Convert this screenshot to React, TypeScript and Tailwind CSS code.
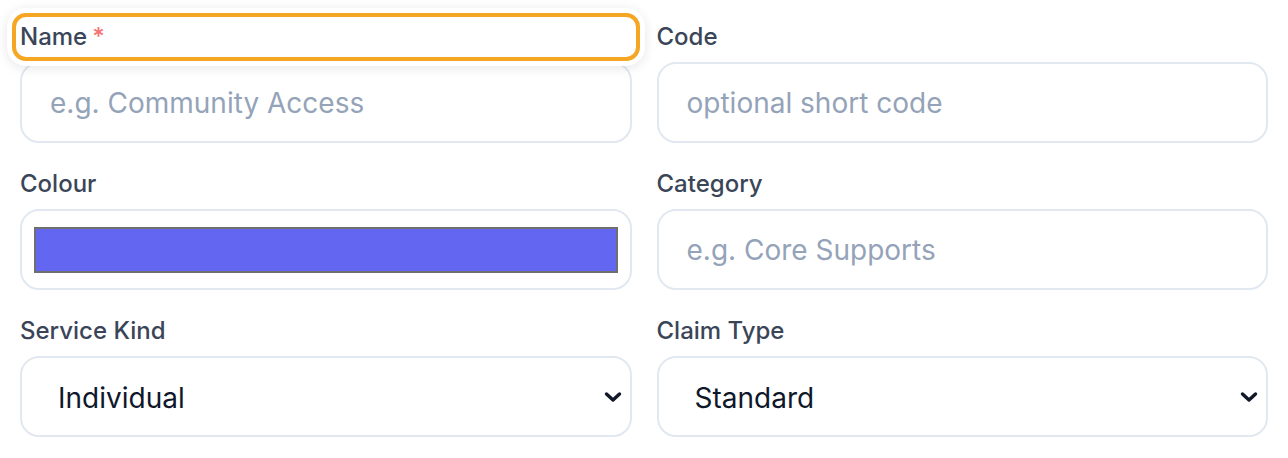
import { ReactNode } from 'react'

const font = { fontFamily: 'Inter, "Noto Sans", sans-serif' }

function Field({ label, required, focused, children }: { label: string; required?: boolean; focused?: boolean; children: ReactNode }) {
  return (
    <div className="flex flex-col">
      <div className="relative mb-[9px] h-[32px]">
        {focused && (
          <div className="pointer-events-none absolute -inset-2 rounded-[14px] border-4 border-[#f5a623] shadow-[0_0_0_5px_#ffffff,0_2px_12px_5px_rgba(0,0,0,0.10)]" />
        )}
        <label className="relative flex h-[32px] items-center text-[24px] font-medium leading-[32px] text-[#3a4658]">
          {label}
          {required && <span className="ml-[5px] text-[#f87171]">*</span>}
        </label>
      </div>
      {children}
    </div>
  )
}

function TextInput({ placeholder }: { placeholder: string }) {
  return (
    <input
      placeholder={placeholder}
      className="h-[81px] w-full rounded-[19px] border-2 border-[#e2e8f0] bg-white px-[28px] text-[28px] text-[#0f172a] outline-none placeholder:text-[#94a3b8]"
      style={font}
    />
  )
}

function Select({ value }: { value: string }) {
  return (
    <div className="relative">
      <select
        defaultValue={value}
        className="h-[81px] w-full appearance-none rounded-[19px] border-2 border-[#e2e8f0] bg-white pl-[36px] pr-12 pt-[2px] text-[28px] text-[#0f172a] outline-none"
        style={font}
      >
        <option>{value}</option>
      </select>
      <svg
        className="pointer-events-none absolute right-[10px] top-1/2 -translate-y-1/2"
        width="18"
        height="12"
        viewBox="0 0 18 12"
        fill="none"
      >
        <path d="M2.5 3 L9 9 L15.5 3" stroke="#111827" strokeWidth="3.4" strokeLinecap="round" strokeLinejoin="round" />
      </svg>
    </div>
  )
}

export default function App() {
  return (
    <div className="min-h-[458px] bg-white px-[20px] pt-[21px]" style={font}>
      <div className="grid grid-cols-2 gap-x-[25px] gap-y-[25px]">
        <Field label="Name" required focused>
          <TextInput placeholder="e.g. Community Access" />
        </Field>
        <Field label="Code">
          <TextInput placeholder="optional short code" />
        </Field>
        <Field label="Colour">
          <div className="flex h-[81px] w-full items-center rounded-[19px] border-2 border-[#e2e8f0] bg-white px-[12px]">
            <div className="h-[46px] w-full border-2 border-[#6f6f6f] bg-[#6366f1]" />
          </div>
        </Field>
        <Field label="Category">
          <TextInput placeholder="e.g. Core Supports" />
        </Field>
        <Field label="Service Kind">
          <Select value="Individual" />
        </Field>
        <Field label="Claim Type">
          <Select value="Standard" />
        </Field>
      </div>
    </div>
  )
}
